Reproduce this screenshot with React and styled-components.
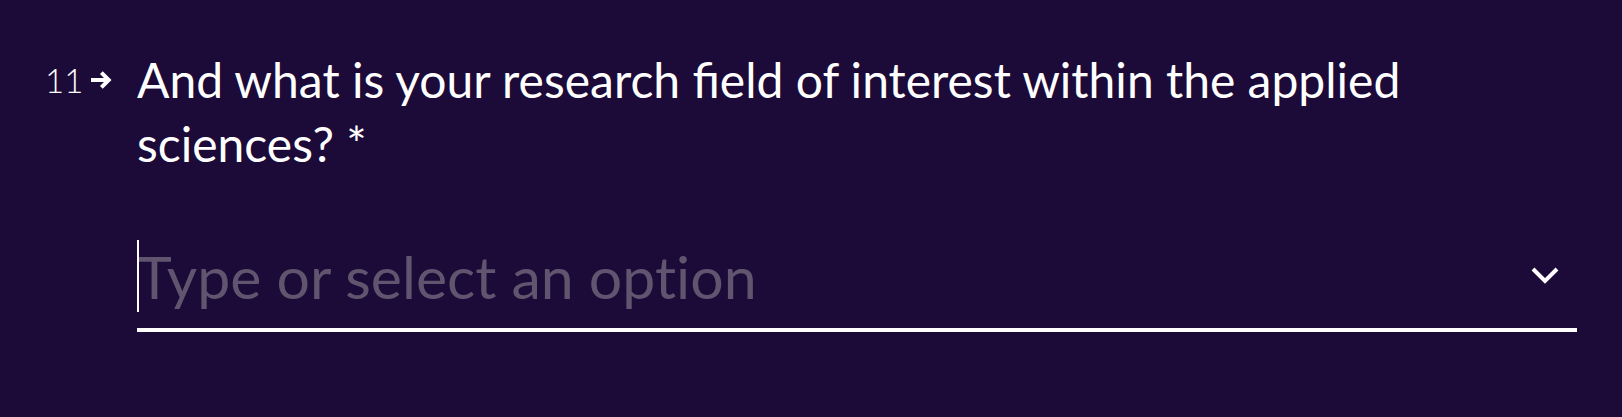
import React from "react";
import styled, { createGlobalStyle } from "styled-components";

const GlobalStyle = createGlobalStyle`
  * { box-sizing: border-box; }
  body { margin: 0; background: #1c0a38; color: #fff; font-family: Lato, sans-serif; }
`;
const Question = styled.form`
  display: grid;
  grid-template-columns: 68px 1fr;
  column-gap: 24px;
  padding: 48px 45px 84px;
  min-height: 100vh;
`;
const Counter = styled.div`
  display: flex;
  align-items: center;
  justify-content: flex-end;
  gap: 8px;
  height: 64px;
  font-size: 33px;
  font-weight: 300;
`;
const Title = styled.label`
  display: block;
  max-width: 1300px;
  font-size: 48px;
  line-height: 64px;
`;
const Body = styled.div`
  display: flex;
  flex-direction: column;
  gap: 64px;
`;
const Field = styled.div`
  position: relative;
  display: flex;
  align-items: center;
  padding: 0 16px 16px 0;
  border-bottom: 4px solid #fff;
`;
const Input = styled.input`
  flex: 1;
  min-width: 0;
  height: 72px;
  padding: 0;
  border: 0;
  outline: 0;
  background: transparent;
  color: #fff;
  caret-color: transparent;
  font: 400 59px Lato, sans-serif;
  font-variant-ligatures: none;
  &::placeholder { color: #61546f; opacity: 1; }
`;
const Caret = styled.span`
  position: absolute;
  top: 0;
  left: 0;
  width: 2px;
  height: 72px;
  background: #fff;
  pointer-events: none;
`;
const Toggle = styled.button`
  display: flex;
  padding: 0 0 2px;
  border: 0;
  background: none;
  color: #fff;
`;

export default function App() {
  return (
    <>
      <GlobalStyle />
      <Question>
        <Counter>
          11
          <svg width="22" height="20" viewBox="0 0 22 20" fill="none" stroke="currentColor" strokeWidth="4" aria-hidden="true">
            <path d="M0 10H18M10.5 2.5L18 10l-7.5 7.5" />
          </svg>
        </Counter>
        <Body>
          <Title htmlFor="field">
            And what is your research field of interest within the applied sciences? *
          </Title>
          <Field>
            <Input id="field" type="text" placeholder="Type or select an option" autoFocus />
            <Caret aria-hidden="true" />
            <Toggle type="button" aria-label="Show options">
              <svg width="32" height="20" viewBox="0 0 32 20" fill="none" stroke="currentColor" strokeWidth="4">
                <path d="M4 4l12 12L28 4" />
              </svg>
            </Toggle>
          </Field>
        </Body>
      </Question>
    </>
  );
}
